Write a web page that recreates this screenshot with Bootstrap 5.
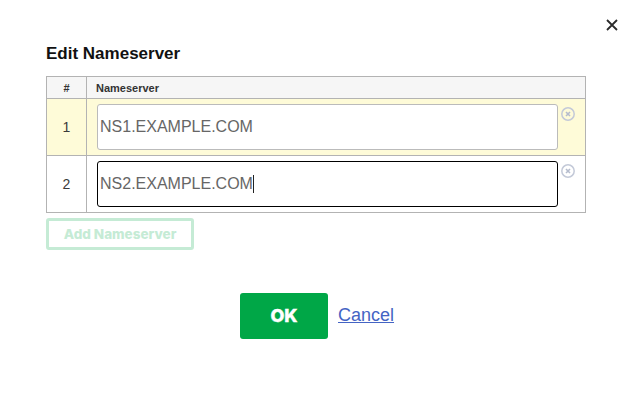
<!DOCTYPE html>
<html lang="en">
<head>
<meta charset="utf-8">
<title>Edit Nameserver</title>
<link href="https://cdn.jsdelivr.net/npm/bootstrap@5.3.0/dist/css/bootstrap.min.css" rel="stylesheet">
<style>
html,body{height:402px;overflow:hidden}
body{background:#fff;font-family:"Liberation Sans",Arial,sans-serif;color:#222}
.dlg{position:relative;width:635px;height:402px;padding:44px 49px 0 46px}
.close-x{position:absolute;left:606px;top:19px;width:12px;height:12px;padding:0;border:0;background:none;display:block;line-height:0}
.dlg-title{font-size:17px;font-weight:700;line-height:19px;margin:0 0 13px;color:#111}
.ns-table{width:540px;table-layout:fixed;border-collapse:collapse;margin:0}
.ns-table th,.ns-table td{border:1px solid #b3b3b3;padding:0}
.ns-table th{background:#f6f6f6;height:22px;font-size:11px;font-weight:700;color:#333;line-height:12px}
.ns-table .num-col{width:40px;text-align:center}
.ns-table th.name-col{text-align:left;padding-left:9px}
.ns-table td.num-col{font-size:14px;color:#3a3a3a}
.ns-table tr.hl td{background:#fefbd8}
.row-a{height:57px}
.row-b{height:57px}
.name-cell{padding:5px 0 0 10px !important;vertical-align:top}
.ns-wrap{position:relative;display:flex;align-items:flex-start;gap:3px;height:46px}
.ns-input{width:461px;height:46px;flex:none;padding:0 2px;font-size:16px;line-height:44px;color:#666;background:#fff;border:1px solid #bbb;border-radius:3px;font-family:"Liberation Sans",Arial,sans-serif}
.ns-input.focused{border-color:#000}
.caret-bar{position:absolute;left:156px;top:14px;width:1px;height:18px;background:#222}
.rm{display:block;margin-top:3px;line-height:0;flex:none}
.add-btn,.add-btn:disabled{display:block;width:148px;height:32px;margin-top:5px;padding:0;font-family:Inter,"Liberation Sans",sans-serif;font-weight:800;font-size:13.5px;color:#c5ebd5;background:#fff;border:3px solid #c5ebd5;border-radius:3px;line-height:26px;text-align:center;opacity:1}
.acts{display:flex;align-items:center;margin-top:43px;padding-left:194px;gap:10px}
.ok-btn{width:88px;height:46px;padding:0;background:#00a747;border:0;border-radius:3px;color:#fff;font-family:Inter,"Liberation Sans",sans-serif;font-weight:800;font-size:18px;line-height:46px;text-align:center;-webkit-text-stroke:.4px #fff}
.cancel{color:#4464c4;font-size:18px;line-height:21px;text-decoration:underline;margin-top:-2px}
</style>
</head>
<body>
<div class="dlg">
  <button type="button" class="close-x" aria-label="Close"><svg width="12" height="12" viewBox="0 0 12 12"><path d="M1 1L11 11M11 1L1 11" stroke="#2b2b2b" stroke-width="1.8" fill="none"/></svg></button>
  <h1 class="dlg-title">Edit Nameserver</h1>
  <table class="ns-table">
    <thead><tr><th class="num-col">#</th><th class="name-col">Nameserver</th></tr></thead>
    <tbody>
      <tr class="hl row-a"><td class="num-col">1</td><td class="name-cell"><div class="ns-wrap"><input class="ns-input form-control" value="NS1.EXAMPLE.COM"><span class="rm"><svg width="15" height="15" viewBox="0 0 15 15"><circle cx="7" cy="7" r="6.2" fill="none" stroke="#c3c9d8" stroke-width="1.5"/><path d="M5 5L9 9M9 5L5 9" stroke="#b5bccd" stroke-width="1.6"/></svg></span></div></td></tr>
      <tr class="row-b"><td class="num-col">2</td><td class="name-cell"><div class="ns-wrap"><input class="ns-input form-control focused" value="NS2.EXAMPLE.COM"><span class="caret-bar"></span><span class="rm"><svg width="15" height="15" viewBox="0 0 15 15"><circle cx="7" cy="7" r="6.2" fill="none" stroke="#c3c9d8" stroke-width="1.5"/><path d="M5 5L9 9M9 5L5 9" stroke="#b5bccd" stroke-width="1.6"/></svg></span></div></td></tr>
    </tbody>
  </table>
  <button type="button" class="add-btn btn" disabled>Add Nameserver</button>
  <div class="acts">
    <button type="button" class="ok-btn btn">OK</button>
    <a href="#" class="cancel">Cancel</a>
  </div>
</div>
<script src="https://cdn.jsdelivr.net/npm/bootstrap@5.3.0/dist/js/bootstrap.bundle.min.js"></script>
</body>
</html>
